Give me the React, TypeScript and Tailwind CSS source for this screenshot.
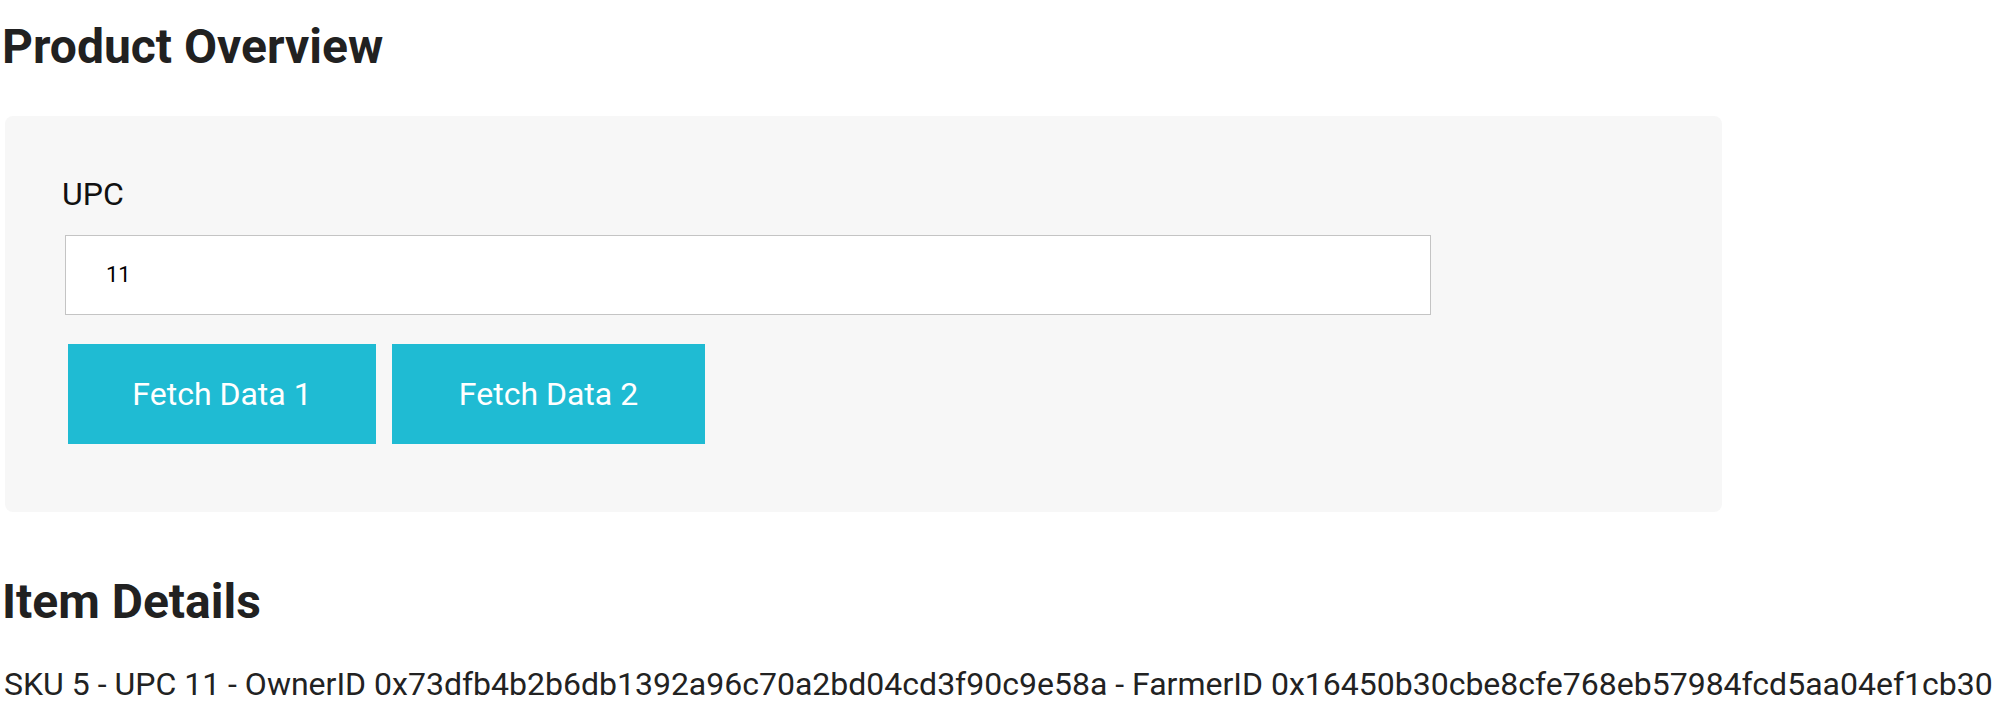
import React from 'react';

const App: React.FC = () => {
  const [upc, setUpc] = React.useState('11');

  return (
    <div className="min-h-screen bg-white font-['Roboto','Liberation_Sans',sans-serif] text-[#212121]">
      <h1 className="pl-[2px] pt-[19px] text-[48px] font-bold leading-[56px] text-[#212121]">Product Overview</h1>

      <div className="ml-[5px] mt-[41px] w-[1717px] rounded-lg bg-[#f7f7f7] pb-[68px] pl-[57px] pt-[60px]">
        <label className="block text-[32px] leading-[37.5px] text-[#111]">UPC</label>
        <input
          value={upc}
          onChange={(e) => setUpc(e.target.value)}
          className="ml-[3px] mt-[21px] block h-[80px] w-[1366px] border border-[#c4c4c4] bg-white pl-[40px] text-[22px] text-black outline-none"
        />
        <div className="ml-[6px] mt-[29px] flex gap-[16px]">
          <button className="h-[100px] w-[308px] bg-[#1fbbd3] text-[32px] text-white">Fetch Data 1</button>
          <button className="h-[100px] w-[313px] bg-[#1fbbd3] text-[32px] text-white">Fetch Data 2</button>
        </div>
      </div>

      <h2 className="mt-[62px] pl-[2px] text-[48px] font-bold leading-[56px] text-[#212121]">Item Details</h2>
      <p className="mt-[36px] whitespace-nowrap pl-[4px] text-[32px] leading-[37.5px] text-[#222]">
        SKU 5 - UPC 11 - OwnerID 0x73dfb4b2b6db1392a96c70a2bd04cd3f90c9e58a - FarmerID 0x16450b30cbe8cfe768eb57984fcd5aa04ef1cb30
      </p>
    </div>
  );
};

export default App;
